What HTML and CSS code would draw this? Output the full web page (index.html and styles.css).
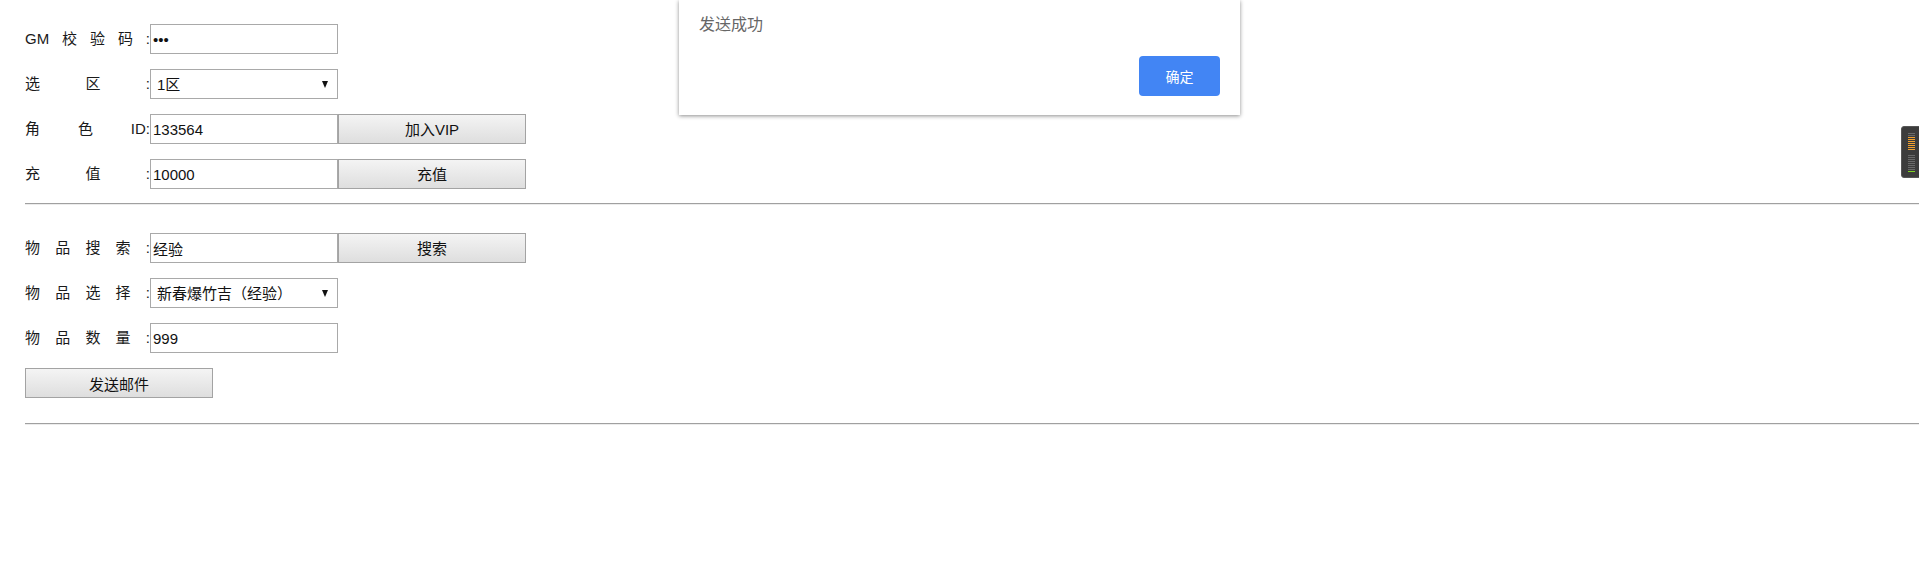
FILE: index.html
```html
<!DOCTYPE html>
<html lang="zh-CN">
<head>
<meta charset="utf-8">
<title>GM</title>
<link rel="stylesheet" href="styles.css">
</head>
<body>
<div class="page">
  <section class="group group-top">
    <div class="row">
      <label class="lbl">GM校验码:</label>
      <input class="field" type="password" value="123">
    </div>
    <div class="row">
      <label class="lbl">选区:</label>
      <span class="select-wrap">
        <select class="field select"><option>1区</option></select>
      </span>
    </div>
    <div class="row">
      <label class="lbl">角色ID:</label>
      <input class="field" type="text" value="133564">
      <button class="btn">加入VIP</button>
    </div>
    <div class="row">
      <label class="lbl">充值:</label>
      <input class="field" type="text" value="10000">
      <button class="btn">充值</button>
    </div>
  </section>
  <hr class="sep sep-1">
  <section class="group group-bottom">
    <div class="row">
      <label class="lbl">物品搜索:</label>
      <input class="field" type="text" value="经验">
      <button class="btn">搜索</button>
    </div>
    <div class="row">
      <label class="lbl">物品选择:</label>
      <span class="select-wrap">
        <select class="field select"><option>新春爆竹吉（经验）</option></select>
      </span>
    </div>
    <div class="row">
      <label class="lbl">物品数量:</label>
      <input class="field" type="text" value="999">
    </div>
    <div class="row">
      <button class="btn btn-wide">发送邮件</button>
    </div>
  </section>
  <hr class="sep sep-2">
</div>

<div class="dialog">
  <div class="dialog-msg">发送成功</div>
  <div class="dialog-actions">
    <button class="dialog-ok">确定</button>
  </div>
</div>

<div class="meter">
  <span class="bar off"></span>
  <span class="bar off"></span>
  <span class="bar warn"></span>
  <span class="bar warn"></span>
  <span class="bar warn"></span>
  <span class="bar warn"></span>
  <span class="bar warn"></span>
  <span class="bar warn"></span>
  <span class="bar warn"></span>
  <span class="bar none"></span>
  <span class="bar none"></span>
  <span class="bar off"></span>
  <span class="bar off"></span>
  <span class="bar off"></span>
  <span class="bar off"></span>
  <span class="bar off"></span>
  <span class="bar off"></span>
  <span class="bar off"></span>
  <span class="bar off"></span>
  <span class="bar ok"></span>
</div>
</body>
</html>
```

FILE: styles.css
```css
html, body {
  margin: 0;
  padding: 0;
  background: #ffffff;
}

body {
  font-family: "Liberation Sans", "Noto Sans CJK SC", sans-serif;
  font-size: 15px;
  color: #1a1a1a;
  overflow: hidden;
}

.page {
  padding-left: 25px;
}

.group {
  display: flex;
  flex-direction: column;
  gap: 15px;
}

.group-top {
  padding-top: 24px;
}

.group-bottom {
  padding-top: 28px;
}

.row {
  display: flex;
  align-items: center;
  height: 30px;
}

.lbl {
  width: 125px;
  flex-shrink: 0;
  text-align: justify;
  text-align-last: justify;
  font-size: 15px;
  line-height: 18px;
  color: #1a1a1a;
  white-space: nowrap;
}

.field {
  box-sizing: border-box;
  width: 188px;
  height: 30px;
  margin: 0;
  padding: 0 2px;
  border: 1px solid #a9a9a9;
  background: #fff;
  font-family: "Liberation Sans", "Noto Sans CJK SC", sans-serif;
  font-size: 15px;
  color: #111;
  outline: none;
}

.select-wrap {
  position: relative;
  display: inline-block;
  width: 188px;
  height: 30px;
}

.select {
  -webkit-appearance: none;
  appearance: none;
  padding-left: 6px;
}

.select-wrap::after {
  content: "";
  position: absolute;
  right: 10px;
  top: 12px;
  width: 0;
  height: 0;
  border-left: 3.5px solid transparent;
  border-right: 3.5px solid transparent;
  border-top: 7px solid #111;
  pointer-events: none;
}

.btn {
  box-sizing: border-box;
  width: 188px;
  height: 30px;
  margin: -1px 0 0 0;
  padding: 0;
  border: 1px solid #a3a3a3;
  border-radius: 0;
  background: linear-gradient(#f4f4f4, #dedede);
  font-family: "Liberation Sans", "Noto Sans CJK SC", sans-serif;
  font-size: 15px;
  color: #111;
}

.btn-wide {
  width: 188px;
  margin-top: 0;
}

.sep {
  height: 0;
  margin: 0;
  border: 0;
  border-top: 1px solid #a0a0a0;
  border-bottom: 1px solid #ececec;
}

.sep-1 {
  margin-top: 14px;
}

.sep-2 {
  margin-top: 25px;
}

/* alert dialog overlay */
.dialog {
  position: absolute;
  top: 0;
  left: 679px;
  width: 561px;
  box-sizing: border-box;
  padding: 12px 20px 19px 20px;
  background: #fff;
  box-shadow: 0 1px 4px rgba(0, 0, 0, 0.45);
  font-family: "Noto Sans CJK SC", "Liberation Sans", sans-serif;
}

.dialog-msg {
  font-size: 16px;
  line-height: 22px;
  color: #666;
}

.dialog-actions {
  display: flex;
  justify-content: flex-end;
  margin-top: 22px;
}

.dialog-ok {
  width: 81px;
  height: 40px;
  border: 0;
  border-radius: 4px;
  background: #4285f4;
  color: #fff;
  font-family: "Noto Sans CJK SC", "Liberation Sans", sans-serif;
  font-size: 14px;
  padding: 0;
}

/* side level meter overlay */
.meter {
  position: fixed;
  top: 126px;
  right: -6px;
  width: 24px;
  height: 52px;
  box-sizing: border-box;
  padding: 6px 0 0 6px;
  background: #3c3c3c;
  border: 1px solid #565656;
  border-radius: 3px;
  display: flex;
  flex-direction: column;
  gap: 1px;
}

.bar {
  display: block;
  width: 7px;
  height: 1px;
  flex-shrink: 0;
}

.bar.off { background: #6a6a6a; }
.bar.warn { background: #f0a030; }
.bar.none { background: transparent; }
.bar.ok { background: #7ed321; }
```
